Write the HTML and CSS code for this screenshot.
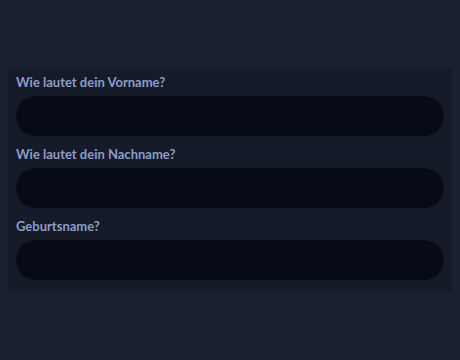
FILE: index.html
```html
<!DOCTYPE html>
<html lang="de">
<head>
<meta charset="utf-8">
<link rel="stylesheet" href="styles.css">
</head>
<body>
<form class="panel">
  <div class="field">
    <label class="label" for="vorname">Wie lautet dein Vorname?</label>
    <input class="input" id="vorname" type="text">
  </div>
  <div class="field">
    <label class="label" for="nachname">Wie lautet dein Nachname?</label>
    <input class="input" id="nachname" type="text">
  </div>
  <div class="field">
    <label class="label" for="geburtsname">Geburtsname?</label>
    <input class="input" id="geburtsname" type="text">
  </div>
</form>
</body>
</html>
```

FILE: styles.css
```css
html, body {
  background: #1a2030;
}
body {
  margin: 8px;
  font-family: Lato, "Noto Sans", sans-serif;
}
.panel {
  margin: 61px 0 0;
  background: #151b28;
  padding: 5px 8px 11px;
  display: flex;
  flex-direction: column;
  gap: 10px;
}
.field {
  display: flex;
  flex-direction: column;
}
.label {
  font-size: 13px;
  font-weight: 700;
  line-height: 16px;
  color: #8c9cc6;
  margin-bottom: 6px;
}
.input {
  box-sizing: border-box;
  height: 40px;
  width: 100%;
  border: none;
  border-radius: 20px;
  background: #060b15;
  outline: none;
  padding: 0 16px;
  font: inherit;
  color: #c8d2ea;
}
```
